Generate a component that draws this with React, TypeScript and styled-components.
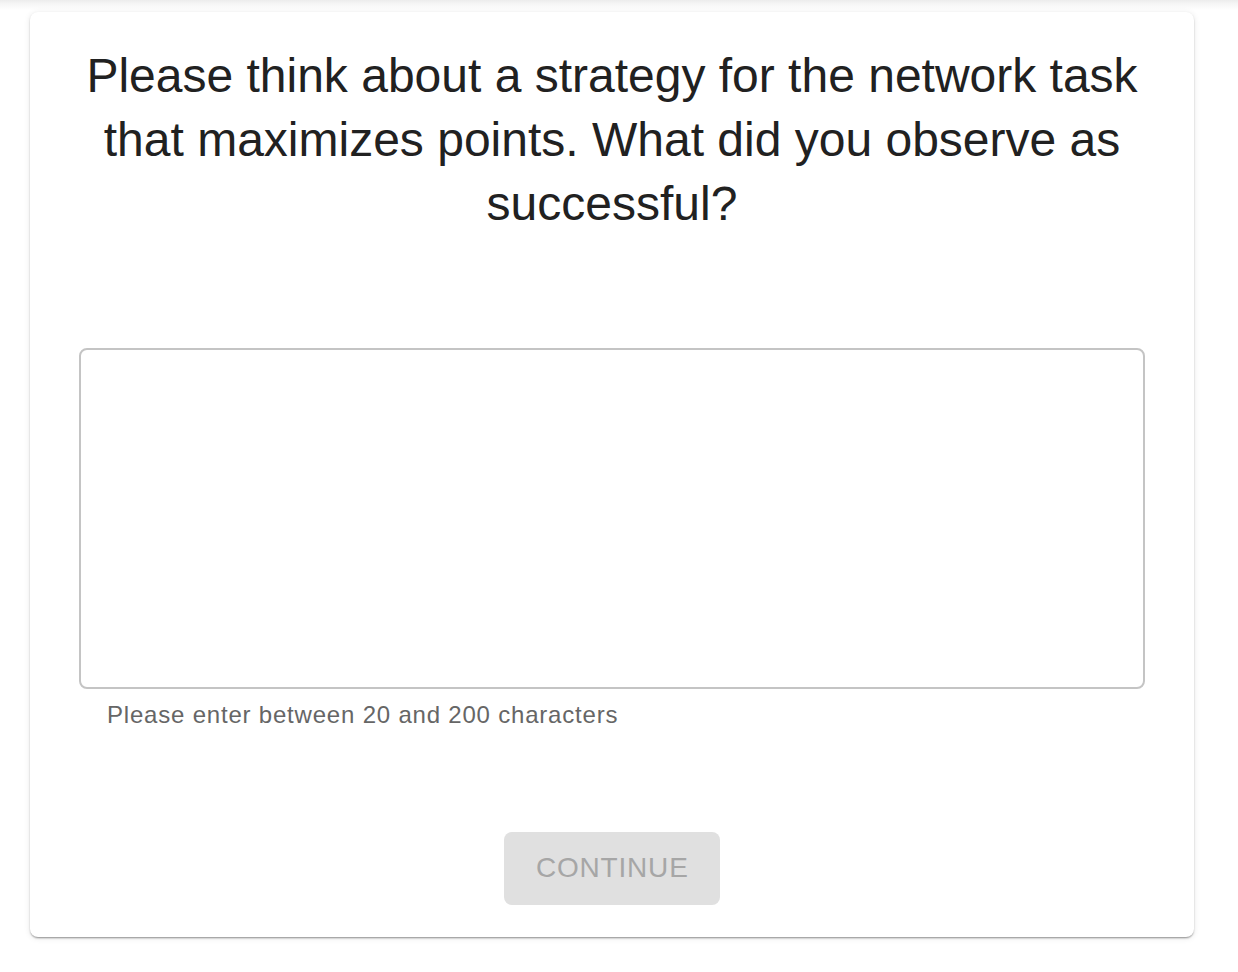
import React from "react";
import styled, { createGlobalStyle } from "styled-components";

const GlobalStyle = createGlobalStyle`
  html, body {
    margin: 0;
    padding: 0;
    background: #ffffff;
    font-family: "Liberation Sans", Arial, Helvetica, sans-serif;
  }
  * { box-sizing: border-box; }
`;

const Page = styled.div`
  display: flex;
  flex-direction: column;
  width: 1238px;
  min-height: 972px;
  background: #ffffff;
`;

const TopShade = styled.div`
  height: 10px;
  margin-bottom: 2px;
  background: linear-gradient(to bottom, #ececec 0%, #f6f6f6 40%, #ffffff 100%);
`;

const Card = styled.main`
  width: 1164px;
  margin-left: 30px;
  padding: 32px 49px 32px;
  background: #ffffff;
  border-radius: 8px;
  box-shadow: 0 2px 2px -1px rgba(0, 0, 0, 0.3), 0 1px 2px 0 rgba(0, 0, 0, 0.14),
    0 1px 6px 0 rgba(0, 0, 0, 0.1);
  display: flex;
  flex-direction: column;
  align-items: stretch;
`;

const Title = styled.h1`
  margin: 0 auto;
  max-width: 1066px;
  font-size: 48px;
  line-height: 64px;
  font-weight: 400;
  color: #212121;
  text-align: center;
`;

const Field = styled.div`
  margin-top: 112px;
  display: flex;
  flex-direction: column;
`;

const TextArea = styled.textarea`
  display: block;
  width: 100%;
  height: 341px;
  resize: none;
  border: 2px solid #c4c4c4;
  border-radius: 8px;
  padding: 33px 28px;
  font-family: inherit;
  font-size: 32px;
  color: #212121;
  outline: none;
  background: #ffffff;
`;

const Helper = styled.p`
  margin: 6px 28px 0;
  font-size: 24px;
  line-height: 39.84px;
  letter-spacing: 0.8px;
  color: #666666;
`;

const Actions = styled.div`
  margin-top: 97px;
  display: flex;
  justify-content: center;
`;

const Button = styled.button`
  width: 216px;
  height: 73px;
  border: none;
  border-radius: 8px;
  background: #e0e0e0;
  color: #a6a6a6;
  font-family: inherit;
  font-size: 28px;
  font-weight: 500;
  letter-spacing: 0.8px;
  text-transform: uppercase;
  padding: 12px 32px;
  cursor: default;
`;

export default function App() {
  return (
    <>
      <GlobalStyle />
      <Page>
        <TopShade />
        <Card>
          <Title>
            Please think about a strategy for the network task that maximizes
            points. What did you observe as successful?
          </Title>
          <Field>
            <TextArea aria-label="strategy" />
            <Helper>Please enter between 20 and 200 characters</Helper>
          </Field>
          <Actions>
            <Button disabled>Continue</Button>
          </Actions>
        </Card>
      </Page>
    </>
  );
}
